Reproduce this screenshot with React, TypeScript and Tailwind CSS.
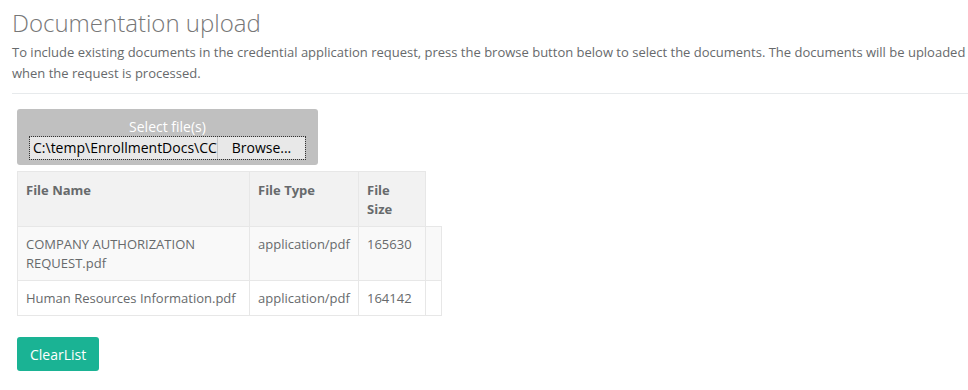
import React from 'react'

const files = [
  { name: 'COMPANY AUTHORIZATION REQUEST.pdf', type: 'application/pdf', size: '165630' },
  { name: 'Human Resources Information.pdf', type: 'application/pdf', size: '164142' },
]

export default function App() {
  return (
    <div className="min-h-screen bg-white pl-3 pt-[7px] text-[13px] text-[#676a6c]" style={{ fontFamily: '"Open Sans", "Liberation Sans", sans-serif' }}>
      <h2 className="text-[24px] font-light leading-[32px] text-[#777]">Documentation upload</h2>
      <p className="mt-[3px] leading-[21px] text-[#676a6c]">
        To include existing documents in the credential application request, press the browse button below to select the documents. The documents will be uploaded when the request is processed.
      </p>
      <div className="mt-[9px] border-t border-[#e7eaec]" />

      <div className="ml-[5px] mt-[15px]">
        {/* upload box */}
        <div className="flex w-[301px] flex-col items-center rounded-[3px] bg-[#c0c0c0] pb-[5px] pt-[8px]">
          <div className="text-[14px] leading-[19px] text-white">Select file(s)</div>
          <div className="flex h-[24px] w-[277px] border border-dotted border-[#333]">
            <div className="w-[187px] overflow-hidden whitespace-nowrap bg-[#e8e8e8] pl-[3px] text-[14px] leading-[22px] text-black">
              C:\temp\EnrollmentDocs\CC
            </div>
            <div className="flex-1 border-l border-[#c8c8c8] bg-[#e8e8e8] text-center text-[14px] leading-[22px] text-black">
              Browse...
            </div>
          </div>
        </div>

        {/* file table */}
        <table className="mt-[6px] border-collapse">
          <thead>
            <tr className="bg-[#f2f2f2]">
              <th className="w-[232px] border border-[#e7e7e7] px-2 pb-[7px] pt-[9px] text-left align-top font-bold leading-[19px] text-[#676a6c]">File Name</th>
              <th className="w-[109px] border border-[#e7e7e7] px-2 pb-[7px] pt-[9px] text-left align-top font-bold leading-[19px] text-[#676a6c]">File Type</th>
              <th className="w-[67px] border border-[#e7e7e7] px-2 pb-[7px] pt-[9px] text-left align-top font-bold leading-[19px] text-[#676a6c]">File<br />Size</th>
            </tr>
          </thead>
          <tbody>
            {files.map((f, i) => (
              <tr key={f.name} className={i % 2 === 0 ? 'bg-[#f9f9f9]' : 'bg-white'}>
                <td className="border border-[#e7e7e7] px-2 pb-[7px] pt-[8px] align-top leading-[19px]">{f.name}</td>
                <td className="border border-[#e7e7e7] px-2 pb-[7px] pt-[8px] align-top leading-[19px]">{f.type}</td>
                <td className="border border-[#e7e7e7] px-2 pb-[7px] pt-[8px] align-top leading-[19px]">{f.size}</td>
                <td className="w-[16px] border border-[#e7e7e7]" />
              </tr>
            ))}
          </tbody>
        </table>

        <button className="mt-[21px] h-[34px] rounded-[3px] bg-[#1ab394] px-[13px] text-[14px] text-white">ClearList</button>
      </div>
    </div>
  )
}
